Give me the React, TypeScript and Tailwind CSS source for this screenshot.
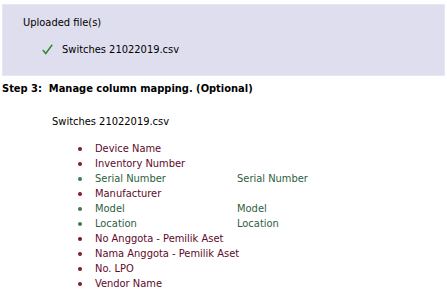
const fields = [
  { name: 'Device Name', mapped: '' },
  { name: 'Inventory Number', mapped: '' },
  { name: 'Serial Number', mapped: 'Serial Number' },
  { name: 'Manufacturer', mapped: '' },
  { name: 'Model', mapped: 'Model' },
  { name: 'Location', mapped: 'Location' },
  { name: 'No Anggota - Pemilik Aset', mapped: '' },
  { name: 'Nama Anggota - Pemilik Aset', mapped: '' },
  { name: 'No. LPO', mapped: '' },
  { name: 'Vendor Name', mapped: '' },
];

export default function App() {
  return (
    <div className="h-[296px] w-[447px] overflow-hidden bg-white font-['DejaVu_Sans_Condensed','DejaVu_Sans',sans-serif] text-[11px] leading-[13px] text-black">
      <div className="mx-[2px] mt-[4px] h-[72px] border border-[#e6e6f8] bg-[#dedeee] pl-[20px] pt-[11px]">
        <p>Uploaded file(s)</p>
        <div className="mt-[14px] flex items-center gap-[9px] pl-[19px]">
          <svg width="11" height="11" viewBox="0 0 11 11" className="shrink-0">
            <path d="M0.8 6 L3.8 9.5 L10.2 0.8" fill="none" stroke="#2f8a2f" strokeWidth="1.5" />
          </svg>
          <span>Switches 21022019.csv</span>
        </div>
      </div>

      <h3 className="mt-[6px] pl-[2px] font-bold">Step 3:&nbsp; Manage column mapping. (Optional)</h3>

      <div className="pl-[52px] pt-[20px]">
        <p>Switches 21022019.csv</p>
        <ul className="mt-[13px] pl-[26px]">
          {fields.map((f) => (
            <li key={f.name} className="flex h-[15px] items-center whitespace-nowrap">
              <span
                className={`mr-[13px] h-[4px] w-[4px] shrink-0 rounded-full ${f.mapped ? 'bg-[#3e7a4e]' : 'bg-[#7a1a22]'}`}
              />
              <span className={`w-[142px] shrink-0 ${f.mapped ? 'text-[#2e5e3e]' : 'text-[#5e0a2a]'}`}>{f.name}</span>
              <span className="text-[#2e5e3e]">{f.mapped}</span>
            </li>
          ))}
        </ul>
      </div>
    </div>
  );
}
